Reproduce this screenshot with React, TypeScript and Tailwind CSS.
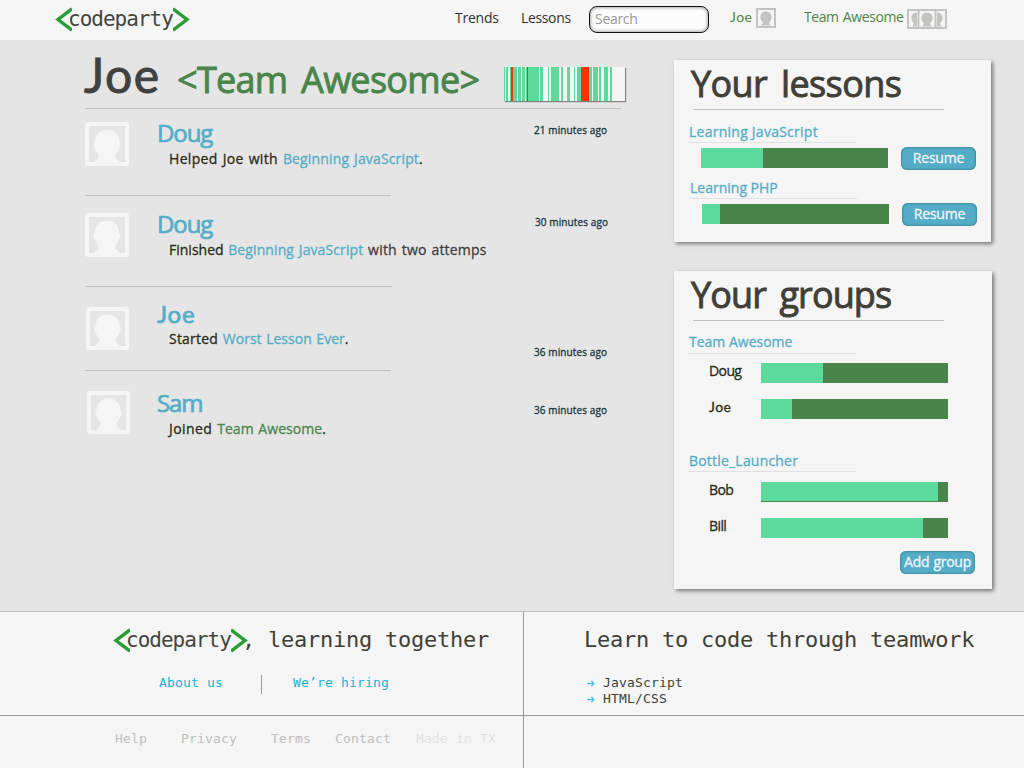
import React from "react";

const SANS = "font-['Open_Sans',sans-serif]";
const LATO = "font-['Lato',sans-serif]";
const MONO = "font-['DejaVu_Sans_Mono',monospace]";
const MEDIUM = "[-webkit-text-stroke:0.3px_currentColor]";
const STRONG = "[-webkit-text-stroke:0.7px_currentColor]";
const HEAVY = "[-webkit-text-stroke:0.9px_currentColor]";

function Logo({ className }: { className: string }) {
  return (
    <div className={`flex w-[136px] h-[25px] items-center ${className}`}>
      <svg className="shrink-0" width="17" height="25" viewBox="0 0 17 25" fill="none" stroke="#2b9b38" strokeWidth="3.4">
        <path d="M17 1.800 L3 12.500 L17 23.200" />
      </svg>
      <span className={`${MONO} -mt-[1px] -ml-[4px] w-[106px] shrink-0 whitespace-nowrap text-[21px] leading-[25px] tracking-[-1px] text-[#45453e]`}>
        codeparty
      </span>
      <svg className="-ml-px shrink-0" width="17" height="25" viewBox="0 0 17 25" fill="none" stroke="#2b9b38" strokeWidth="3.4">
        <path d="M0 1.800 L14 12.500 L0 23.200" />
      </svg>
    </div>
  );
}

const HEAD =
  "M22 7.500 C29 7.500 34.300 12.500 34.300 20 C36 21 36 24 34.300 26 C33.500 28.500 32 30 31 32 C29.500 34.500 30.500 36 33 38 L36 40.500 H8 L11 38 C13.500 36 14.500 34.500 13 32 C12 30 10.500 28.500 9.700 26 C8 24 8 21 9.700 20 C9.700 12.500 15 7.500 22 7.500 Z";

function Avatar({ className }: { className: string }) {
  return (
    <svg className={`shrink-0 ${className}`} viewBox="0 0 44 44">
      <rect x="2" y="2" width="40" height="40" rx="1.5" fill="none" stroke="#f5f5f5" strokeWidth="4" />
      <path d={HEAD} fill="#f5f5f5" />
    </svg>
  );
}

function MiniAvatar() {
  return (
    <svg width="20" height="20" viewBox="0 0 20 20">
      <rect x="1" y="1" width="18" height="18" fill="#f5f5f5" stroke="#c3c3c1" strokeWidth="2" />
      <path d="M10 3.500c3.400 0 5.600 2.400 5.600 5.400 0 2.300-1.100 4.100-2.400 5.200 0 1.400.5 2 1.800 3.500H5c1.300-1.500 1.800-2.100 1.800-3.500C5.500 13 4.400 11.200 4.400 8.900 4.400 5.900 6.600 3.500 10 3.500Z" fill="#c3c3c1" />
    </svg>
  );
}

function GroupIcon() {
  return (
    <svg width="40" height="20" viewBox="0 0 40 20">
      <path d="M11 1H1V19H11M29 1H39V19H29" fill="none" stroke="#c3c3c1" strokeWidth="2" />
      <path d="M10 3.500C6.600 3.500 4.400 5.900 4.400 8.900c0 2.300 1.100 4.100 2.400 5.200 0 1.400-.5 2-1.800 3.500h5ZM30 3.500c3.400 0 5.600 2.400 5.600 5.400 0 2.300-1.100 4.100-2.400 5.200 0 1.400.5 2 1.800 3.500h-5Z" fill="#c3c3c1" />
      <rect x="11.500" y="1" width="17" height="18" fill="#f5f5f5" stroke="#c3c3c1" strokeWidth="2" />
      <path d="M20 3.500c3.400 0 5.600 2.400 5.600 5.400 0 2.300-1.100 4.100-2.400 5.200 0 1.400.5 2 1.800 3.500H15c1.300-1.500 1.800-2.100 1.800-3.500-1.300-1.100-2.400-2.900-2.400-5.200C14.400 5.900 16.600 3.500 20 3.500Z" fill="#c3c3c1" />
    </svg>
  );
}

const STRIPES: [number, number, boolean?][] = [
  [0, 1], [2, 2], [6, 1], [7, 2, true], [9, 4], [14, 3], [18, 3], [22, 1], [23, 1, true],
  [24, 11], [36, 3], [44, 1], [47, 8], [57, 2], [63, 3], [70, 1], [73, 4], [77, 8, true],
  [85, 3], [89, 5], [95, 2], [100, 4], [106, 2],
];

function Activity() {
  return (
    <svg width="121" height="34" viewBox="0 0 121 34" shapeRendering="crispEdges"
      className="mt-[17px] shrink-0 bg-[#f5f5f5] shadow-[1px_1px_1px_#808080]">
      {STRIPES.map(([x, w, red]) => (
        <rect key={x} x={x} y="0" width={w} height="34" fill={red ? "#ff3300" : "#5bda9c"} />
      ))}
    </svg>
  );
}

type FeedProps = {
  name: string;
  nameClass: string;
  avatarClass: string;
  rowClass: string;
  bodyClass: string;
  timeClass: string;
  time: string;
  children: React.ReactNode;
};

function FeedRow(p: FeedProps) {
  return (
    <article className={`flex items-start ${p.rowClass}`}>
      <div className="w-[72px] shrink-0">
        <Avatar className={p.avatarClass} />
      </div>
      <div className={`w-[376px] shrink-0 ${p.bodyClass}`}>
        <h2 className={`${STRONG} h-[28px] text-[24px] leading-[28px] text-[#54adc7] ${p.nameClass}`}>{p.name}</h2>
        <p className={`${MEDIUM} flex whitespace-pre pl-[12px] text-[14px] leading-[20px] [word-spacing:1px] text-[#2b2a18]`}>{p.children}</p>
      </div>
      <time className={`${MEDIUM} whitespace-nowrap text-[10px] leading-[12px] tracking-[0.1px] text-[#17343c] ${p.timeClass}`}>{p.time}</time>
    </article>
  );
}

function Bar({ fill, className = "" }: { fill: string; className?: string }) {
  return (
    <div className={`h-[20px] w-[187px] shrink-0 bg-[#49854b] ${className}`}>
      <div className={`bg-[#5bda9c] ${fill}`} />
    </div>
  );
}

function Button({ children, className }: { children: string; className: string }) {
  return (
    <button className={`${MEDIUM} flex h-[23px] w-[75px] shrink-0 items-center justify-center whitespace-nowrap rounded-[6px] bg-[#54adc7] pb-px text-[14px] leading-[20px] text-[#f5f5f5] shadow-[inset_0_0_2px_1px_#3f8ba2] ${className}`}>
      {children}
    </button>
  );
}

function CardTitle({ children, className }: { children: string; className: string }) {
  return (
    <div className="h-[50px]">
      <h2 className={`${HEAVY} h-[49px] whitespace-nowrap pl-[17px] text-[36px] leading-[48px] text-[#3f3f38] ${className}`}>{children}</h2>
      <div className="ml-[19px] h-px w-[251px] bg-[#bfbfbf]" />
    </div>
  );
}

function SectionTitle({ children, className }: { children: string; className: string }) {
  return (
    <h3 className={`${MEDIUM} ml-[14px] h-[22px] w-[168px] whitespace-nowrap border-b border-[#e1e1e1] pl-px text-[14px] leading-[20px] text-[#54adc7] ${className}`}>
      {children}
    </h3>
  );
}

function Member({ name, fill, className }: { name: string; fill: string; className: string }) {
  return (
    <div className={`flex pl-[35px] ${className}`}>
      <span className={`${MEDIUM} -mt-[2px] w-[52px] shrink-0 text-[14px] leading-[20px] text-[#2b2a18] ${name === "Joe" ? `${LATO} tracking-[0.5px]` : "tracking-[-0.6px]"}`}>{name}</span>
      <Bar fill={fill} />
    </div>
  );
}

function Arrow() {
  return (
    <svg className="mr-[8px] mt-[5px]" width="8" height="7" viewBox="0 0 8 7" fill="none" stroke="#54c0dc" strokeWidth="1.300">
      <path d="M0 3.500H7M4.300.8L7 3.500 4.300 6.200" />
    </svg>
  );
}

export default function App() {
  return (
    <div className={`${SANS} flex h-[768px] w-[1024px] flex-col overflow-hidden bg-[#e5e5e5]`}>
      <header className="flex h-[40px] shrink-0 items-start bg-[#f5f5f5] text-[14px] leading-[20px] text-[#333]">
        <Logo className="ml-[55px] mt-[7px]" />
        <nav className="ml-[264px] mt-[8px] flex">
          <a className="w-[66px] tracking-[-0.25px]">Trends</a>
          <a className="w-[68px] tracking-[-0.35px]">Lessons</a>
        </nav>
        <div className="mt-[6px] h-[27px] w-[120px] rounded-[8px] border border-[#111] bg-[#fcfcfc] pl-[5px] leading-[23px] tracking-[-0.3px] text-[#999] shadow-[inset_0_0_3px_1px_#aaa]">
          Search
        </div>
        <a className={`${LATO} ml-[21px] mt-[7px] w-[26px] tracking-[0.5px] text-[#49854b]`}>Joe</a>
        <div className="mt-[8px]"><MiniAvatar /></div>
        <a className="ml-[28px] mt-[7px] w-[103px] whitespace-nowrap tracking-[-0.42px] [word-spacing:1px] text-[#49854b]">Team Awesome</a>
        <div className="mt-[9px]"><GroupIcon /></div>
      </header>

      <main className="flex h-[571px] shrink-0">
        <section className="ml-[85px] w-[541px] shrink-0">
          <div className="flex h-[69px] items-start pt-[10px]">
            <div className="mt-px flex w-[419px] shrink-0 items-baseline whitespace-nowrap">
              <h1 className={`${LATO} ${HEAVY} -ml-px w-[93px] text-[48px] leading-[48px] tracking-[1.5px] text-[#3f4040]`}>Joe</h1>
              <span className={`${HEAVY} text-[36px] leading-[48px] tracking-[-0.7px] [word-spacing:5px] text-[#49854b]`}>&lt;Team Awesome&gt;</span>
            </div>
            <Activity />
          </div>
          <div className="-mt-px h-px w-[536px] bg-[#bfbfbf]" />

          <FeedRow name="Doug" nameClass="tracking-[-1.1px]" rowClass="h-[86px]" avatarClass="mt-[13px] size-[44px]" bodyClass="pt-[10px] [&>p]:mt-[2px]" timeClass="mt-[15px] ml-[1px]" time="21 minutes ago">
            <span className="tracking-[0.33px]">Helped Joe with </span>
            <span className="tracking-[0.15px] text-[#54adc7]">Beginning JavaScript</span>.
          </FeedRow>
          <div className="h-px w-[306px] bg-[#bfbfbf]" />
          <FeedRow name="Doug" nameClass="tracking-[-1.1px]" rowClass="h-[90px]" avatarClass="mt-[17px] size-[44px]" bodyClass="pt-[14px] [&>p]:mt-[2px]" timeClass="mt-[20px] ml-[2px]" time="30 minutes ago">
            <span>Finished </span>
            <span className="tracking-[0.1px] text-[#54adc7]">Beginning JavaScript</span>
            <span className="tracking-[0.2px] text-[#3f4040]"> with two attemps</span>
          </FeedRow>
          <div className="ml-px h-px w-[306px] bg-[#bfbfbf]" />
          <FeedRow name="Joe" nameClass={`${LATO} tracking-[0.8px]`} rowClass="h-[83px]" avatarClass="mt-[20px] ml-px size-[43px]" bodyClass="pt-[13px] [&>p]:mt-[1px]" timeClass="mt-[59px] ml-[1px]" time="36 minutes ago">
            <span className="tracking-[0.2px]">Started </span>
            <span className="text-[#54adc7]">Worst Lesson Ever</span>.
          </FeedRow>
          <div className="h-px w-[306px] bg-[#bfbfbf]" />
          <FeedRow name="Sam" nameClass="tracking-[-1.1px]" rowClass="h-[86px]" avatarClass="mt-[20px] ml-[2px] size-[43px]" bodyClass="pt-[18px] [&>p]:mt-[2px]" timeClass="mt-[33px] ml-[1px]" time="36 minutes ago">
            <span className="tracking-[0.4px]">Joined </span>
            <span className="tracking-[0.05px] text-[#49854b]">Team Awesome</span>.
          </FeedRow>
        </section>

        <aside className="ml-[48px] mt-[20px] flex flex-col">
          <section className="h-[182px] w-[317px] bg-[#f5f5f5] shadow-[2px_2px_4px_#777]">
            <CardTitle className="tracking-[-0.6px] [word-spacing:5px]">Your lessons</CardTitle>
            <SectionTitle className="mt-[11px] pt-px tracking-[0.25px]">Learning JavaScript</SectionTitle>
            <div className="mt-[4px] flex items-start">
              <Bar fill="h-full w-[62px]" className="ml-[27px] mt-px" />
              <Button className="ml-[13px] tracking-[-0.2px]">Resume</Button>
            </div>
            <SectionTitle className="mt-[7px] translate-x-px pt-px">Learning PHP</SectionTitle>
            <div className="mt-[4px] flex items-start">
              <Bar fill="h-full w-[18px]" className="ml-[28px] mt-px" />
              <Button className="ml-[13px] tracking-[-0.2px]">Resume</Button>
            </div>
          </section>

          <section className="mt-[29px] h-[318px] w-[318px] bg-[#f5f5f5] shadow-[2px_2px_4px_#777]">
            <CardTitle className="tracking-[-0.9px] [word-spacing:5px]">Your groups</CardTitle>
            <SectionTitle className="mt-[11px]">Team Awesome</SectionTitle>
            <Member name="Doug" fill="h-full w-[62px]" className="mt-[9px]" />
            <Member name="Joe" fill="h-full w-[31px]" className="mt-[16px]" />
            <SectionTitle className="mt-[31px] pt-px tracking-[0.2px]">Bottle_Launcher</SectionTitle>
            <Member name="Bob" fill="h-[19px] w-[177px]" className="mt-[10px]" />
            <Member name="Bill" fill="h-full w-[162px]" className="mt-[16px]" />
            <Button className="ml-[226px] mt-[13px] tracking-[-0.3px] [word-spacing:1px]">Add group</Button>
          </section>
        </aside>
      </main>

      <footer className={`${MONO} flex h-[157px] shrink-0 flex-col border-t border-[#bfbfbf] bg-[#f5f5f5] text-[13px] leading-[16px] tracking-[0.17px]`}>
        <div className="flex h-[104px] shrink-0 border-b border-[#999]">
          <div className="w-[524px] shrink-0 border-r border-[#999]">
            <div className="flex h-[63px] items-start">
              <Logo className="ml-[113px] mt-[16px]" />
              <span className="-ml-[7px] mt-[14px] whitespace-pre text-[22px] leading-[28px] tracking-[-0.24px] text-[#3f3f38]">, learning together</span>
            </div>
            <div className="flex whitespace-nowrap pl-[159px] text-[#17b3d3]">
              <a className="w-[102px]">About us</a>
              <div className="h-[19px] w-px bg-[#999]" />
              <a className="ml-[31px]">We’re hiring</a>
            </div>
          </div>
          <div className="pl-[60px] text-[#3f3f38]">
            <div className="h-[63px] whitespace-nowrap pt-[14px] text-[22px] leading-[28px] tracking-[-0.24px]">Learn to code through teamwork</div>
            <div className="flex pl-[3px]"><Arrow />JavaScript</div>
            <div className="flex pl-[3px]"><Arrow />HTML/CSS</div>
          </div>
        </div>
        <div className="flex flex-1 whitespace-nowrap">
          <div className="flex w-[524px] shrink-0 border-r border-[#999] pl-[115px] pt-[15px] text-[#bfbfbd]">
            <a className="w-[66px] shrink-0">Help</a>
            <a className="w-[90px] shrink-0">Privacy</a>
            <a className="w-[64px] shrink-0">Terms</a>
            <a className="w-[81px] shrink-0">Contact</a>
            <span className="text-[#e3e3e3]">Made in TX</span>
          </div>
        </div>
      </footer>
    </div>
  );
}
